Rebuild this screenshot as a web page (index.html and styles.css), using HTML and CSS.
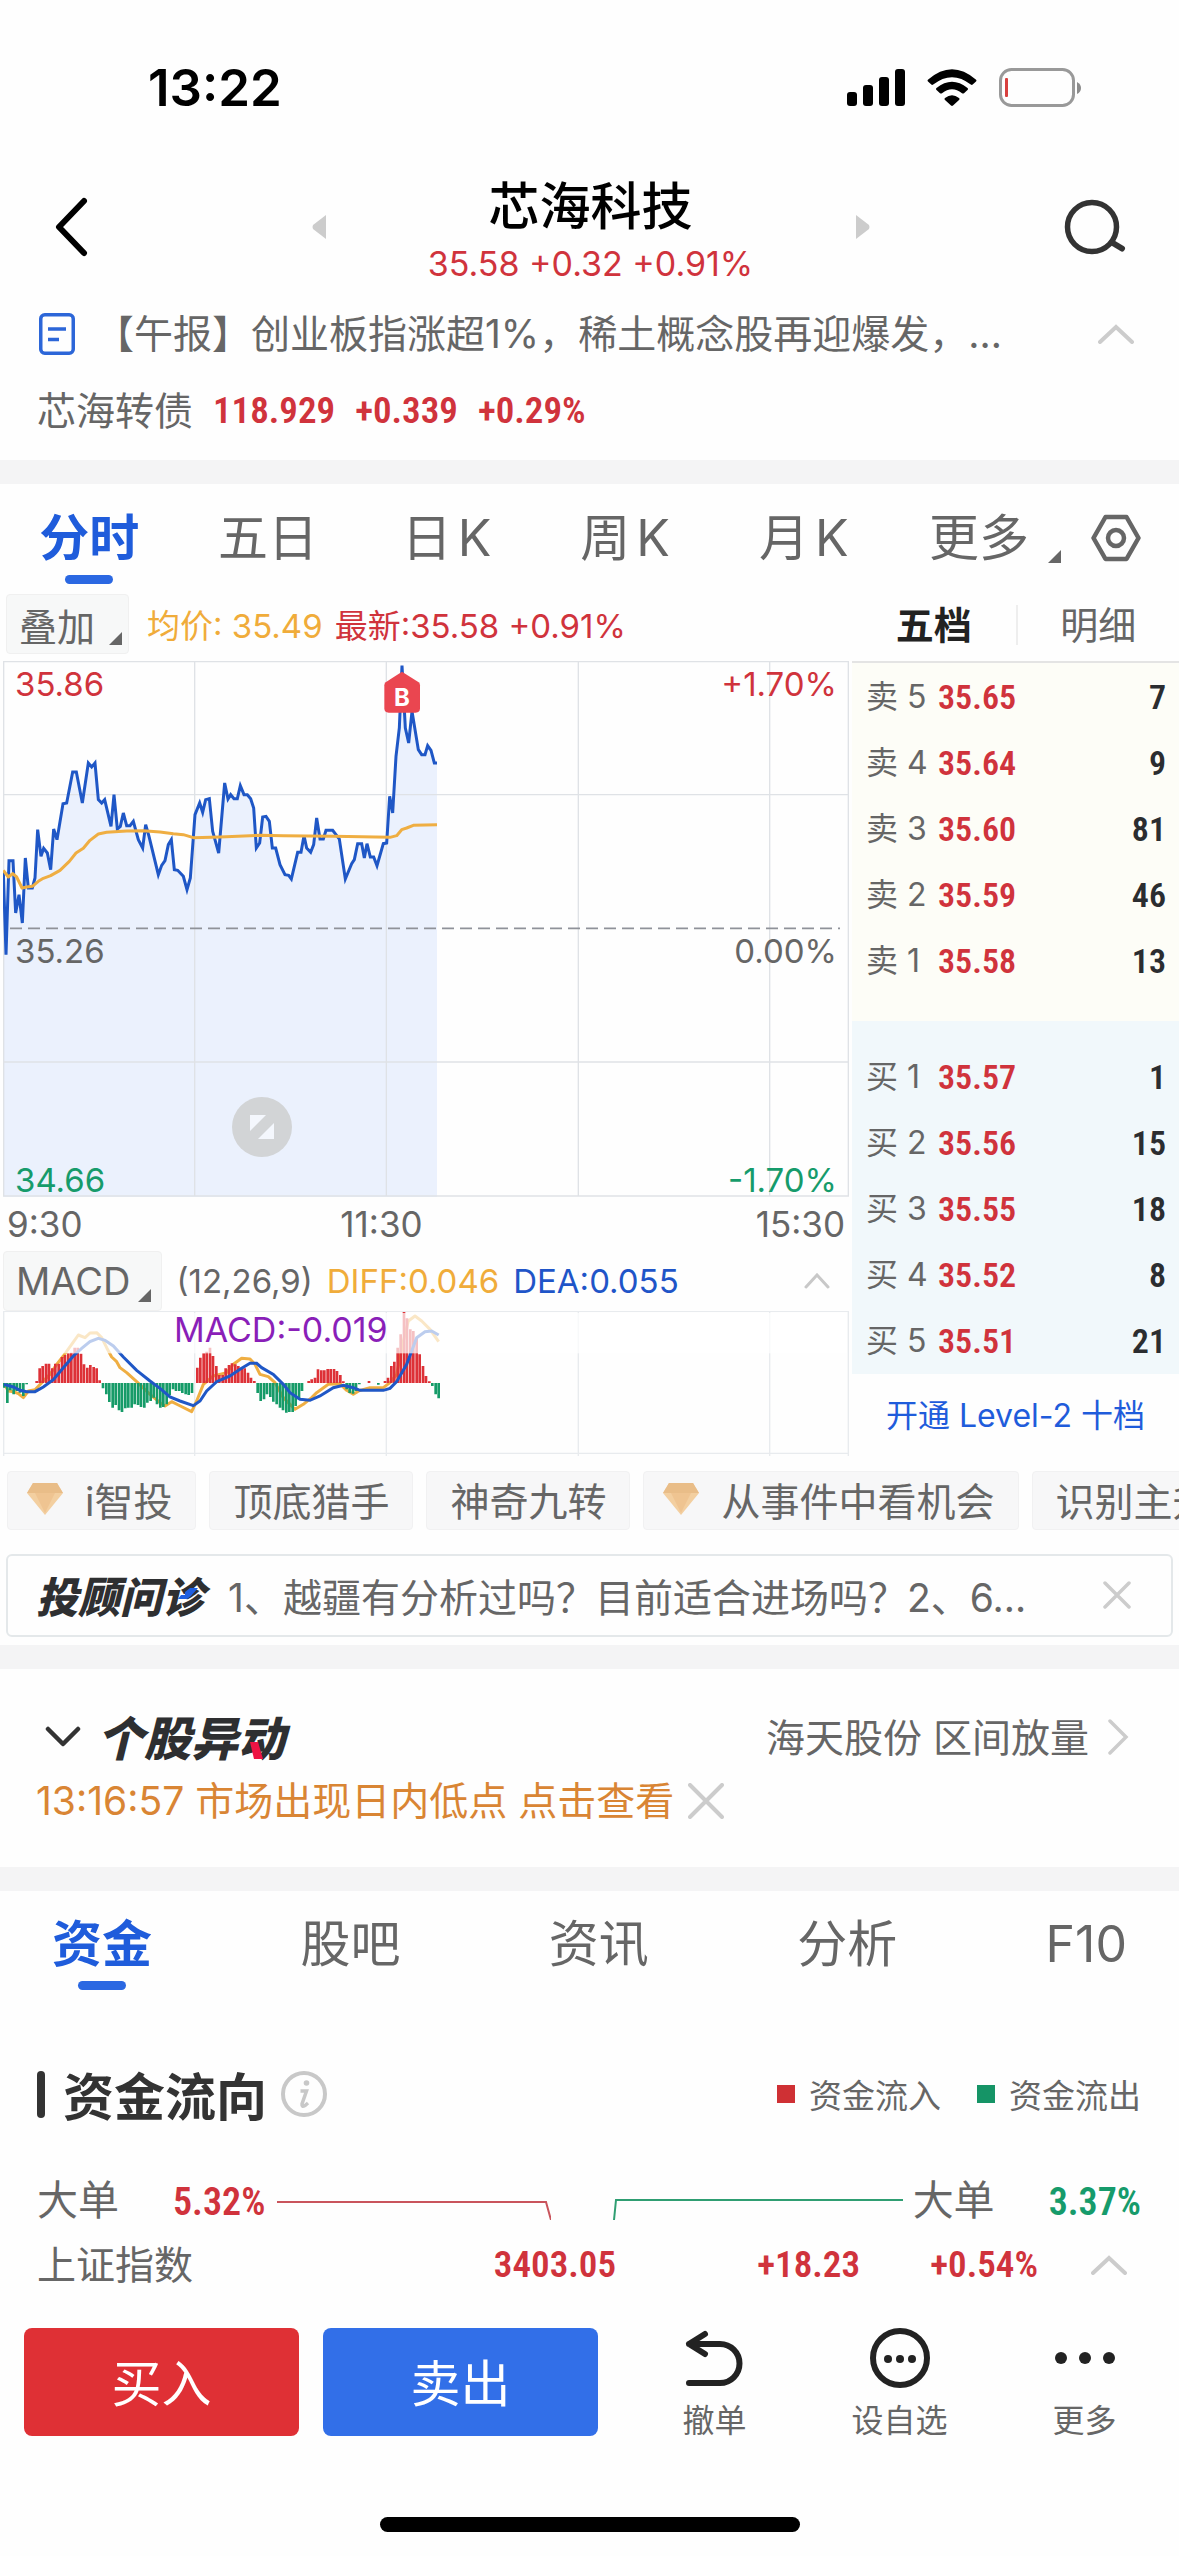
FILE: index.html
```html
<!DOCTYPE html>
<html lang="zh-CN">
<head>
<meta charset="utf-8">
<meta name="viewport" content="width=device-width, initial-scale=1">
<title>芯海科技 35.58</title>
<link rel="stylesheet" href="styles.css">
</head>
<body>
<div class="status">
  <time class="status-time">13:22</time>
  <div class="status-icons">
    <svg width="58" height="38" viewBox="0 0 58 38"><g fill="#000"><rect x="0" y="23" width="10" height="14" rx="3"/><rect x="16" y="16" width="10" height="21" rx="3"/><rect x="32" y="8" width="10" height="29" rx="3"/><rect x="48" y="0" width="10" height="37" rx="3"/></g></svg>
    <svg width="50" height="38" viewBox="0 0 50 38"><path fill="#000" d="M1.200 10.500Q0 11.500 1 12.600L4.300 15.600Q5.200 16.400 6.200 15.600Q25 .8 43.800 15.600Q44.800 16.400 45.700 15.600L49 12.600Q50 11.500 48.800 10.500Q25-10 1.200 10.500ZM9.500 19Q8.500 20 9.500 21L13 24.200Q14 25 15 24.200Q25 16.500 35 24.200Q36 25 37 24.200L40.500 21Q41.500 20 40.500 19Q25 6.500 9.500 19ZM18 29Q17 30 18 31L24 36.500Q25 37.300 26 36.500L32 31Q33 30 32 29Q25 23.500 18 29Z"/></svg>
    <svg width="84" height="40" viewBox="0 0 84 40"><rect x="1.500" y="1.500" width="73" height="36" rx="11" fill="none" stroke="#999" stroke-width="3"/><rect x="6" y="10" width="3" height="19" rx="1" fill="#d8403f"/><path d="M78 14Q82 16 82 20T78 26Z" fill="#8c8c8c"/></svg>
  </div>
</div>

<header class="header">
  <button class="icon-btn back" aria-label="返回"><svg width="33" height="60" viewBox="0 0 33 60"><path d="M29 4L4 30L29 56" fill="none" stroke="#000" stroke-width="6" stroke-linecap="round" stroke-linejoin="round"/></svg></button>
  <button class="icon-btn prev" aria-label="上一只"><svg width="15" height="24" viewBox="0 0 15 24"><path d="M14 0V24L1 14Q0 12 1 10Z" fill="#ccc"/></svg></button>
  <div class="quote">
    <h1>芯海科技</h1>
    <p>35.58 +0.32 +0.91%</p>
  </div>
  <button class="icon-btn next" aria-label="下一只"><svg width="15" height="24" viewBox="0 0 15 24"><path d="M1 0V24L14 14Q15 12 14 10Z" fill="#ccc"/></svg></button>
  <button class="icon-btn search" aria-label="搜索"><svg width="62" height="56" viewBox="0 0 62 56"><circle cx="28" cy="28" r="24.500" fill="none" stroke="#333" stroke-width="5.500"/><path d="M48 43.500L58 49.500" stroke="#333" stroke-width="6" stroke-linecap="round"/></svg></button>
</header>

<a class="news" href="#news">
  <svg width="36" height="42" viewBox="0 0 36 42"><g fill="none" stroke="#2c66d8" stroke-width="3.500"><rect x="1.750" y="1.750" width="32.500" height="38.500" rx="4"/><path d="M9 16H27M9 26.500H20"/></g></svg>
  <span class="news-text">【午报】创业板指涨超1%，稀土概念股再迎爆发，…</span>
  <svg width="36" height="20" viewBox="0 0 36 20"><path d="M2 18L18 3L34 18" fill="none" stroke="#ccc" stroke-width="4" stroke-linecap="round"/></svg>
</a>
<div class="bond"><span>芯海转债</span><b class="num up">118.929</b><b class="num up">+0.339</b><b class="num up">+0.29%</b></div>

<div class="band"></div>

<nav class="tabs period">
  <button class="tab active">分时</button>
  <button class="tab">五日</button>
  <button class="tab">日<span class="k">K</span></button>
  <button class="tab">周<span class="k">K</span></button>
  <button class="tab">月<span class="k">K</span></button>
  <div class="tab-end">
    <button class="tab more">更多<i class="corner"></i></button>
    <button class="icon-btn" aria-label="图表设置"><svg width="50" height="48" viewBox="0 0 50 48"><path d="M14.500 3H35.500L47.500 24L35.500 45H14.500L2.500 24Z" fill="none" stroke="#666" stroke-width="4.500" stroke-linejoin="round"/><circle cx="25" cy="24" r="8" fill="none" stroke="#666" stroke-width="4.500"/></svg></button>
  </div>
</nav>

<main class="market">
  <section class="charts">
    <div class="legend-row">
      <button class="picker">叠加<i class="corner"></i></button>
      <span class="avg">均价: 35.49</span><span class="up">最新:35.58 +0.91%</span>
    </div>
    <div class="plot">
      <svg class="price-svg" viewBox="9 64 2538 1608" preserveAspectRatio="none">
        <path fill="#ebf1fd" d="M10 695L18 945 27 663 39 663 47 820 57 765 67 850 76 655 85 745 97 745 105 715 113 570 123 650 131 626 142 640 152 690 161 568 171 600 189 492 200 490 218 397 229 397 247 490 265 370 275 382 285 370 295 480 305 490 314 480 333 560 342 465 352 568 361 560 370 520 380 558 390 558 400 545 415 600 428 625 437 555 447 590 475 705 485 677 495 663 505 615 514 600 523 690 533 692 550 710 561 750 571 715 585 525 599 490 608 518 617 480 628 477 638 575 656 640 674 430 684 478 692 465 702 477 712 477 721 438 732 465 742 465 752 477 761 505 769 625 779 610 788 532 798 530 808 545 817 625 827 625 840 675 855 705 866 707 874 718 893 638 903 638 912 588 920 625 932 638 941 615 950 535 960 598 970 598 978 572 998 572 1008 585 1018 598 1036 718 1055 672 1063 660 1073 612 1085 612 1093 655 1101 612 1111 652 1121 652 1131 678 1150 612 1160 610 1169 470 1178 520 1188 350 1198 265 1206 78 1216 265 1226 310 1236 215 1255 330 1265 345 1275 345 1283 318 1293 332 1303 370 1311 370V1672H10Z"/>
        <path class="grid" d="M9 66H2547M9 465H2547M9 1267H2547M9 1669H2547M11 66V1670M584 66V1670M1159 66V1670M1735 66V1670M2309 66V1670M2545 66V1670"/>
        <path d="M30 866H2520" stroke="#8f9299" stroke-width="5" stroke-dasharray="36 18" fill="none"/>
        <path class="line-blue" d="M10 695L18 945 27 663 39 663 47 820 57 765 67 850 76 655 85 745 97 745 105 715 113 570 123 650 131 626 142 640 152 690 161 568 171 600 189 492 200 490 218 397 229 397 247 490 265 370 275 382 285 370 295 480 305 490 314 480 333 560 342 465 352 568 361 560 370 520 380 558 390 558 400 545 415 600 428 625 437 555 447 590 475 705 485 677 495 663 505 615 514 600 523 690 533 692 550 710 561 750 571 715 585 525 599 490 608 518 617 480 628 477 638 575 656 640 674 430 684 478 692 465 702 477 712 477 721 438 732 465 742 465 752 477 761 505 769 625 779 610 788 532 798 530 808 545 817 625 827 625 840 675 855 705 866 707 874 718 893 638 903 638 912 588 920 625 932 638 941 615 950 535 960 598 970 598 978 572 998 572 1008 585 1018 598 1036 718 1055 672 1063 660 1073 612 1085 612 1093 655 1101 612 1111 652 1121 652 1131 678 1150 612 1160 610 1169 470 1178 520 1188 350 1198 265 1206 78 1216 265 1226 310 1236 215 1255 330 1265 345 1275 345 1283 318 1293 332 1303 370 1311 370"/>
        <path class="line-gold" d="M10 692L25 712 38 702 50 712 66 745 80 742 97 740 115 725 130 716 152 708 180 692 208 665 228 640 250 626 270 602 295 583 320 578 380 574 430 573 480 577 520 582 550 585 580 594 660 592 780 587 850 588 1000 590 1170 593 1190 588 1205 570 1220 565 1240 557 1311 555"/>
        <path fill="#ea4650" d="M1206 96L1256 128Q1260 131 1260 137V206Q1260 219 1247 219H1166Q1153 219 1153 206V137Q1153 131 1157 128Z"/>
        <text x="1206" y="199" text-anchor="middle" class="marker">B</text>
      </svg>
      <span class="lbl tl up">35.86</span><span class="lbl tr up">+1.70%</span>
      <span class="lbl ml">35.26</span><span class="lbl mr">0.00%</span>
      <span class="lbl bl down">34.66</span><span class="lbl br down">-1.70%</span>
      <button class="expand" aria-label="全屏"><svg width="60" height="60" viewBox="0 0 60 60"><circle cx="30" cy="30" r="30" fill="#d2d4d6"/><path d="M18 18H34L18 34ZM42 26V42H26Z" fill="#f4f7fd"/></svg></button>
    </div>
    <div class="axis"><span>9:30</span><span>11:30</span><span>15:30</span></div>
    <div class="macd-head">
      <button class="picker">MACD<i class="corner"></i></button>
      <span class="param">(12,26,9)</span><span class="avg">DIFF:0.046</span><span class="dea">DEA:0.055</span>
      <svg class="fold" width="26" height="16" viewBox="0 0 26 16"><path d="M2 14L13 2L24 14" fill="none" stroke="#c8c8c8" stroke-width="3" stroke-linecap="round"/></svg>
    </div>
    <div class="plot macd">
      <svg class="macd-svg" viewBox="9 240 2538 435" preserveAspectRatio="none">
        <path class="grid faint" d="M9 241H2547M9 667H2547M11 241V675M584 241V675M1159 241V675M1735 241V675M2309 241V675M2545 241V675"/>
        <path class="line-gold" d="M12 458L25 480 40 482 55 488 70 500 85 480 105 476 125 455 150 430 170 400 190 375 215 340 235 312 255 320 270 306 290 305 305 320 320 350 335 378 350 392 360 410 380 425 410 452 450 490 480 515 495 525 515 512 535 522 575 542 590 510 610 460 640 435 680 425 700 400 725 382 750 384 765 400 780 430 805 437 825 455 850 500 885 535 910 520 935 500 950 485 985 460 1020 458 1040 478 1060 490 1080 478 1110 470 1150 470 1170 455 1190 430 1210 330 1225 270 1245 255 1265 270 1290 295 1316 332"/>
        <path stroke="#dd3137" stroke-width="8" d="M110 456V450M119 456V412M128 456V405M138 456V398M147 456V398M157 456V412M166 456V398M176 456V398M186 456V378M195 456V372M205 456V367M214 456V365M224 456V350M233 456V350M243 456V368M252 456V400M262 456V410M271 456V402M281 456V408M290 456V412M299 456V448M592 456V410M601 456V380M611 456V367M620 456V362M630 456V350M639 456V375M649 456V405M658 456V432M668 456V432M677 456V412M687 456V402M696 456V397M706 456V400M715 456V405M725 456V410M734 456V412M744 456V425M753 456V440M763 456V450M926 456V450M935 456V445M945 456V440M954 456V415M964 456V418M973 456V418M983 456V414M992 456V414M1002 456V414M1011 456V420M1021 456V432M1030 456V451M1107 456V450M1155 456V450M1164 456V440M1174 456V405M1183 456V392M1193 456V350M1202 456V310M1212 456V243M1221 456V262M1231 456V295M1240 456V300M1250 456V320M1259 456V370M1269 456V405M1278 456V435M1288 456V451"/>
        <path stroke="#169b68" stroke-width="8" d="M13 456V470M22 456V516M31 456V478M41 456V490M50 456V480M60 456V485M70 456V495M80 456V460M309 456V472M319 456V490M328 456V513M338 456V530M347 456V522M357 456V538M366 456V543M376 456V532M385 456V530M395 456V530M404 456V520M414 456V522M423 456V528M433 456V530M442 456V515M452 456V510M461 456V500M471 456V520M481 456V530M490 456V528M500 456V520M509 456V492M519 456V475M528 456V480M538 456V480M547 456V486M557 456V490M566 456V492M576 456V486M773 456V486M782 456V510M792 456V505M801 456V490M811 456V498M820 456V512M830 456V520M840 456V530M849 456V538M859 456V545M868 456V543M878 456V543M887 456V525M897 456V505M906 456V480M1040 456V475M1049 456V486M1059 456V488M1068 456V480M1078 456V460M1135 456V461M1297 456V465M1307 456V490M1316 456V502"/>
        <path class="line-blue" d="M12 460L40 468 60 478 80 482 105 482 130 468 160 446 190 410 220 375 245 352 270 332 295 322 315 328 340 345 370 378 410 418 450 450 480 472 510 498 540 510 580 524 600 510 620 480 650 452 690 435 720 415 750 397 770 397 785 410 820 430 850 460 870 485 900 505 930 508 960 495 1000 470 1030 463 1060 470 1080 478 1150 478 1170 472 1190 452 1220 400 1250 320 1275 302 1295 300 1316 312"/>
        <rect x="15" y="246" width="2526" height="121" fill="#fff" opacity=".7"/>
      </svg>
      <span class="macd-value">MACD:-0.019</span>
    </div>
  </section>

  <section class="book">
    <div class="book-tabs"><button class="on">五档</button><button>明细</button></div>
    <table class="sell">
      <tr><th>卖 5</th><td class="num up">35.65</td><td class="num qty">7</td></tr>
      <tr><th>卖 4</th><td class="num up">35.64</td><td class="num qty">9</td></tr>
      <tr><th>卖 3</th><td class="num up">35.60</td><td class="num qty">81</td></tr>
      <tr><th>卖 2</th><td class="num up">35.59</td><td class="num qty">46</td></tr>
      <tr><th>卖 1</th><td class="num up">35.58</td><td class="num qty">13</td></tr>
    </table>
    <table class="buy">
      <tr><th>买 1</th><td class="num up">35.57</td><td class="num qty">1</td></tr>
      <tr><th>买 2</th><td class="num up">35.56</td><td class="num qty">15</td></tr>
      <tr><th>买 3</th><td class="num up">35.55</td><td class="num qty">18</td></tr>
      <tr><th>买 4</th><td class="num up">35.52</td><td class="num qty">8</td></tr>
      <tr><th>买 5</th><td class="num up">35.51</td><td class="num qty">21</td></tr>
    </table>
    <a class="level2" href="#level2">开通 Level-2 十档</a>
  </section>
</main>

<nav class="chips">
  <a class="chip" href="#zhitou"><svg width="36" height="32" viewBox="0 0 36 32"><path d="M6 0H30L36 10L18 32L0 10Z" fill="#f3cfa0"/><path d="M6 0H30L36 10H0Z" fill="#e9bd88"/><path d="M8 10H28L18 30Z" fill="#efc491"/></svg>i智投</a>
  <a class="chip" href="#hunter">顶底猎手</a>
  <a class="chip" href="#nine">神奇九转</a>
  <a class="chip" href="#events"><svg width="36" height="32" viewBox="0 0 36 32"><path d="M6 0H30L36 10L18 32L0 10Z" fill="#f3cfa0"/><path d="M6 0H30L36 10H0Z" fill="#e9bd88"/><path d="M8 10H28L18 30Z" fill="#efc491"/></svg>从事件中看机会</a>
  <a class="chip" href="#rise">识别主升</a>
</nav>

<div class="advice">
  <span class="brand brand-s">投顾问诊<svg class="accent-blue" width="20" height="12" viewBox="0 0 20 12"><path d="M7 4L12 0H20L13 8L9 11H0L3 7H7Z" fill="#1f5fe0"/></svg></span>
  <span class="advice-text">1、越疆有分析过吗？目前适合进场吗？2、6…</span>
  <button class="icon-btn" aria-label="关闭"><svg width="28" height="28" viewBox="0 0 28 28"><path d="M2 2L26 26M26 2L2 26" stroke="#ccc" stroke-width="3.500" stroke-linecap="round"/></svg></button>
</div>

<div class="band"></div>

<section class="movers">
  <div class="movers-head">
    <svg width="36" height="22" viewBox="0 0 36 22"><path d="M3 3L18 18L33 3" fill="none" stroke="#333" stroke-width="4.500" stroke-linecap="round" stroke-linejoin="round"/></svg>
    <h2 class="brand brand-l">个股异动<svg class="accent-red" width="13" height="17" viewBox="0 0 13 17"><path d="M0 0H8L13 17H4Z" fill="#ee1444"/></svg></h2>
    <a class="movers-link" href="#movers"><span>海天股份 区间放量</span><svg width="22" height="36" viewBox="0 0 22 36"><path d="M3 2L19 18L3 34" fill="none" stroke="#ccc" stroke-width="3.500" stroke-linecap="round"/></svg></a>
  </div>
  <div class="notice"><span>13:16:57 市场出现日内低点 点击查看</span><button class="icon-btn" aria-label="关闭提示"><svg width="36" height="36" viewBox="0 0 36 36"><path d="M2 2L34 34M34 2L2 34" stroke="#ccc" stroke-width="4" stroke-linecap="round"/></svg></button></div>
</section>

<div class="band"></div>

<nav class="tabs detail">
  <button class="tab active">资金</button>
  <button class="tab">股吧</button>
  <button class="tab">资讯</button>
  <button class="tab">分析</button>
  <button class="tab">F10</button>
</nav>

<section class="flow">
  <div class="flow-head">
    <h2>资金流向</h2>
    <svg width="46" height="46" viewBox="0 0 46 46"><circle cx="23" cy="23" r="21" fill="none" stroke="#c8c8c8" stroke-width="4"/><circle cx="25.500" cy="12" r="2.800" fill="#c8c8c8"/><path d="M19.500 20H25.500L21 33Q20.500 36.500 24 34.500L27 32" fill="none" stroke="#c8c8c8" stroke-width="3.500"/></svg>
    <span class="key key-in">资金流入</span><span class="key key-out">资金流出</span>
  </div>
  <div class="flow-row">
    <span>大单</span><b class="num up">5.32%</b>
    <svg class="lead-in" width="274" height="30" viewBox="0 0 274 30"><path d="M0 12H269L274 30" fill="none" stroke="#c9545c" stroke-width="2"/></svg>
    <svg class="lead-out" width="290" height="30" viewBox="0 0 290 30"><path d="M1 30L3 10H290" fill="none" stroke="#2f9e72" stroke-width="2"/></svg>
    <span>大单</span><b class="num down">3.37%</b>
  </div>
</section>

<footer>
  <div class="index">
    <span>上证指数</span><b class="num up">3403.05</b><b class="num up">+18.23</b><b class="num up">+0.54%</b>
    <svg width="36" height="20" viewBox="0 0 36 20"><path d="M2 18L18 3L34 18" fill="none" stroke="#ccc" stroke-width="4" stroke-linecap="round"/></svg>
  </div>
  <div class="trade">
    <button class="deal deal-buy">买入</button>
    <button class="deal deal-sell">卖出</button>
    <div class="actions">
      <button class="action"><svg width="60" height="60" viewBox="0 0 60 60"><path d="M4 16H35A19.500 19.500 0 0 1 35 55H4M20 6L4 16L20 26" fill="none" stroke="#222" stroke-width="6" stroke-linecap="round" stroke-linejoin="round"/></svg>撤单</button>
      <button class="action"><svg width="60" height="60" viewBox="0 0 60 60"><circle cx="30" cy="30" r="27" fill="none" stroke="#222" stroke-width="6"/><g fill="#222"><circle cx="18" cy="31" r="4"/><circle cx="30" cy="31" r="4"/><circle cx="42" cy="31" r="4"/></g></svg>设自选</button>
      <button class="action"><svg width="60" height="60" viewBox="0 0 60 60"><g fill="#222"><circle cx="6" cy="30" r="6"/><circle cx="30" cy="30" r="6"/><circle cx="54" cy="30" r="6"/></g></svg>更多</button>
    </div>
  </div>
  <div class="home-bar"></div>
</footer>
</body>
</html>
```
FILE: styles.css
```css
* { box-sizing: border-box; }
body {
  margin: 0;
  background: #fefefe;
  color: #666;
  font-family: Inter, "Noto Sans CJK SC", sans-serif;
  font-size: 39px;
  overflow-x: hidden;
}
h1, h2, p { margin: 0; }
button {
  margin: 0;
  padding: 0;
  border: 0;
  background: none;
  color: inherit;
  font: inherit;
}
a { color: inherit; text-decoration: none; }
svg { display: block; flex: none; }

.up { color: #d0333c; }
.down { color: #169b6b; }
.num {
  font-family: "Roboto Condensed", "Liberation Sans Narrow", Roboto, sans-serif;
  font-size: 37px;
  font-weight: 600;
}
.icon-btn { display: flex; align-items: center; justify-content: center; }
.band { height: 24px; background: #f4f4f5; }
.corner {
  border-bottom: 13px solid #666;
  border-left: 13px solid transparent;
}

/* status bar */
.status {
  display: flex;
  justify-content: space-between;
  align-items: center;
  padding: 58px 96px 0 148px;
  line-height: 60px;
}
.status-time { color: #000; font-size: 51px; font-weight: 600; }
.status-icons { display: flex; align-items: center; gap: 22px; }

/* header */
.header {
  display: grid;
  grid-template-columns: 62px 1fr 500px 1fr 62px;
  align-items: start;
  column-gap: 14px;
  padding: 58px 53px 0 55px;
}
.header .icon-btn { height: 102px; }
.header .back, .header .next { justify-content: flex-start; }
.header .prev { justify-content: flex-end; }
.quote { text-align: center; white-space: nowrap; }
.quote h1 { color: #000; font-size: 51px; font-weight: 500; line-height: 62px; }
.quote p { color: #d0333c; font-size: 34px; line-height: 52px; }

.news {
  display: flex;
  align-items: center;
  padding: 0 45px 0 39px;
  line-height: 88px;
}
.news-text { flex: 1; padding-left: 20px; white-space: nowrap; overflow: hidden; }
.bond { display: flex; gap: 20px; padding: 0 37px 16px; line-height: 66px; }

/* tabs */
.tabs { display: flex; justify-content: space-between; line-height: 106px; }
.tab { position: relative; font-size: 50px; white-space: nowrap; }
.tab.active { color: #1f5cdb; font-weight: 700; }
.tab.active::after {
  content: "";
  position: absolute;
  left: 50%;
  bottom: 7px;
  width: 48px;
  height: 9px;
  margin-left: -24px;
  border-radius: 5px;
  background: #2b68e2;
}
.period { padding-top: 1px; }
.period > .tab { flex: 1 1 0; }
.detail { padding: 0 52px; }
.k { padding-left: 6px; }
.tab-end { display: flex; align-items: center; gap: 30px; padding: 0 38px 0 36px; }
.more { display: flex; align-items: center; gap: 19px; }
.more .corner { margin-top: 36px; }

/* charts and order book */
.market { display: grid; grid-template-columns: minmax(0, 1fr) 327px; column-gap: 3px; }
.charts { padding-left: 3px; }
.legend-row, .macd-head { display: flex; align-items: center; font-size: 33px; white-space: nowrap; }
.legend-row { height: 70px; gap: 12px; padding: 0 0 4px 3px; }
.picker {
  display: flex;
  align-items: center;
  gap: 14px;
  height: 60px;
  padding: 0 6px 0 12px;
  border: 1px solid #f0f0f0;
  border-radius: 4px;
  background: #f7f8f8;
  font-size: 38px;
}
.picker .corner { margin-top: 28px; }
.legend-row .picker { margin-right: 6px; }
.avg { color: #f0ac3a; }
.dea { color: #1f55c8; }
.plot { position: relative; }
.price-svg { width: 100%; height: 536px; }
.macd-svg { width: 100%; height: 145px; }
.grid { fill: none; stroke: #dfe2e6; stroke-width: 4; }
.faint { stroke: #e8ebee; }
.line-blue { fill: none; stroke: #1f57c6; stroke-width: 9; stroke-linejoin: miter; }
.line-gold { fill: none; stroke: #efae42; stroke-width: 9; stroke-linejoin: round; }
.marker { fill: #fff; font-size: 72px; font-weight: 700; }
.lbl { position: absolute; font-size: 33px; line-height: 38px; }
.tl, .ml, .bl { left: 12px; }
.tr, .mr, .br { right: 12px; }
.tl, .tr { top: 4px; }
.ml, .mr { top: 271px; }
.bl, .br { bottom: 0; line-height: 34px; }
.expand { position: absolute; left: 229px; bottom: 40px; }
.axis { display: grid; grid-template-columns: 1fr 1fr 1fr; padding: 0 4px; font-size: 35px; line-height: 54px; }
.axis :nth-child(2) { padding-left: 54px; }
.axis :nth-child(3) { text-align: right; }
.macd-head { height: 60px; gap: 14px; }
.macd-head .picker { gap: 8px; padding-right: 10px; }
.fold { margin-left: auto; margin-right: 19px; }
.macd-value { position: absolute; left: 171px; top: 0; color: #8a1fb8; font-size: 34px; line-height: 38px; }

.book-tabs { display: grid; grid-template-columns: 1fr 1fr; align-items: center; height: 70px; padding-bottom: 2px; font-size: 38px; line-height: 40px; }
.book-tabs .on { color: #222; font-weight: 700; }
.book-tabs button + button { border-left: 2px solid #eee; }
.book table { width: 100%; border-collapse: separate; border-spacing: 0; }
.sell { padding: 1px 13px 27px 14px; border-top: 2px solid #e4e4e4; background: #fdfdf7; }
.buy { padding: 23px 13px 0 14px; background: #f1f8fb; }
.book th, .book td { height: 66px; padding: 0; line-height: 66px; text-align: left; }
.book th { width: 72px; font-size: 32px; font-weight: 400; white-space: nowrap; }
.book td { font-size: 34px; }
.book .qty { color: #2b2d30; text-align: right; }
.level2 { display: block; color: #1f5cdb; font-size: 32px; line-height: 84px; text-align: center; white-space: nowrap; }

/* shortcuts */
.chips { display: flex; gap: 13px; padding: 13px 0 24px 7px; overflow: hidden; }
.chip {
  display: flex;
  flex: none;
  align-items: center;
  gap: 22px;
  height: 59px;
  padding: 0 23px 3px;
  border: 1px solid #f1f1f2;
  border-radius: 4px;
  background: #f7f7f8;
}
.chip:has(svg) { padding-left: 19px; }

.advice {
  display: flex;
  align-items: center;
  height: 83px;
  margin: 0 6px 8px;
  padding: 0 40px 2px 28px;
  border: 2px solid #e4e8ea;
  border-radius: 6px;
}
.advice-text { flex: 1; padding-left: 24px; white-space: nowrap; overflow: hidden; }
.brand { position: relative; color: #2e2f31; font-weight: 900; font-style: italic; white-space: nowrap; }
.brand-s { font-size: 42px; }
.brand-l { font-size: 47px; }
.accent-blue, .accent-red { position: absolute; }
.accent-blue { right: 6px; top: 24px; }
.accent-red { right: 22px; bottom: 15px; }

/* movers */
.movers { padding: 36px 36px 34px; }
.movers-head { display: flex; align-items: center; gap: 16px; height: 64px; padding-left: 9px; }
.movers-head h2, .movers-link span { padding-bottom: 4px; }
.movers-link { display: flex; align-items: center; gap: 18px; margin-left: auto; padding-right: 14px; }
.notice { display: flex; align-items: center; gap: 14px; color: #d98534; line-height: 64px; white-space: nowrap; }

/* money flow */
.flow { padding: 62px 38px 0 37px; }
.flow-head { display: flex; align-items: center; height: 70px; font-size: 33px; }
.flow-head h2 {
  display: flex;
  align-items: center;
  gap: 18px;
  margin-right: 14px;
  color: #333;
  font-size: 51px;
  font-weight: 700;
}
.flow-head h2::before { content: ""; width: 8px; height: 47px; border-radius: 4px; background: #333; }
.key { display: flex; align-items: center; gap: 14px; }
.key::before { content: ""; width: 18px; height: 18px; background: currentColor; }
.key-in { margin-left: auto; margin-right: 36px; }
.key-in::before { background: #cf3034; }
.key-out::before { background: #159466; }
.flow-row { display: flex; align-items: center; height: 91px; padding-top: 51px; font-size: 41px; line-height: 40px; }
.flow-row .num { margin-left: 54px; padding-top: 4px; font-size: 38px; }
.lead-in { margin: 10px auto 0 12px; }
.lead-out { margin: 10px 10px 0 0; }

/* footer */
.index {
  display: grid;
  grid-template-columns: 1fr 200px 244px 178px 89px;
  align-items: center;
  padding: 0 52px 0 37px;
  line-height: 90px;
}
.index .num { text-align: right; }
.index svg { justify-self: end; }
.trade { display: grid; grid-template-columns: 1fr 1fr 557px; gap: 24px; padding: 18px 0 0 24px; }
.deal { height: 108px; padding-bottom: 5px; border-radius: 8px; color: #fff; font-size: 50px; }
.deal-buy { background: #df3035; }
.deal-sell { background: #326fe8; }
.actions { display: grid; grid-template-columns: 1fr 1fr 1fr; padding-right: 2px; }
.action { display: flex; flex-direction: column; align-items: center; gap: 10px; font-size: 32px; line-height: 46px; }
.home-bar { width: 420px; height: 15px; margin: 73px auto 24px; border-radius: 8px; background: #000; }
```
